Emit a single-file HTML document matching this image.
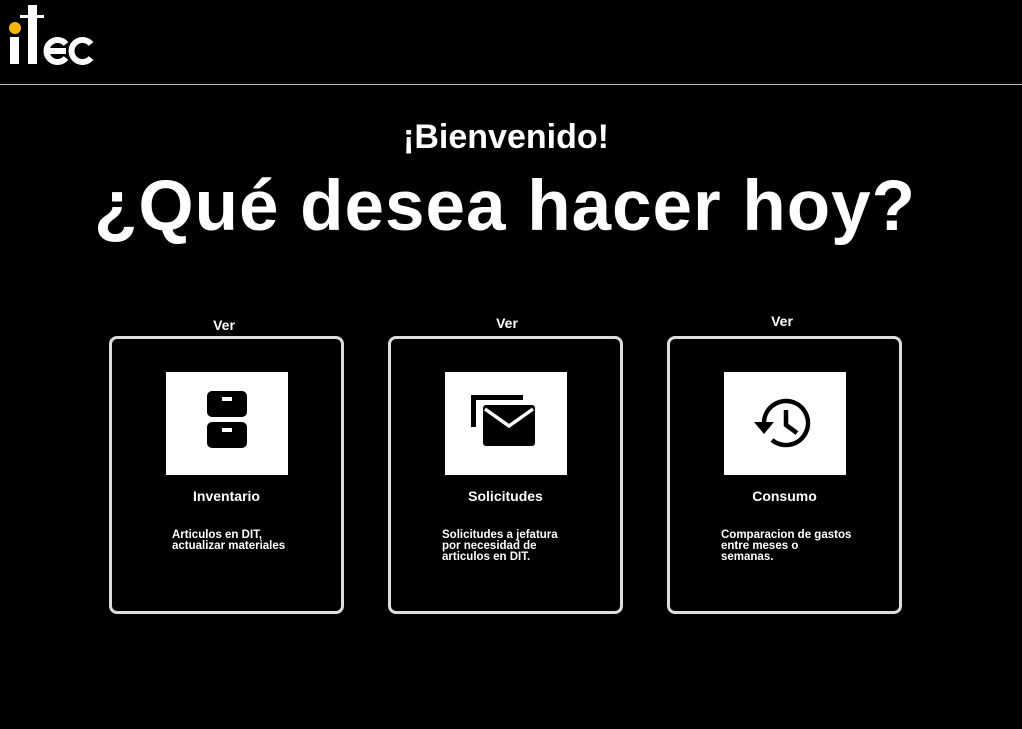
<!DOCTYPE html>
<html><head><meta charset="utf-8"><style>
body{margin:0;width:1022px;height:729px;background:#000;color:#fff;font-family:"Liberation Sans",sans-serif;position:relative;overflow:hidden}
.hr{position:absolute;left:0;top:84px;width:1022px;height:1px;background:#bbb}
.h1{position:absolute;top:118px;left:0;width:1012px;text-align:center;font-size:34px;font-weight:bold}
.h2{position:absolute;top:166px;left:0;width:1010px;text-align:center;font-size:71px;font-weight:bold;letter-spacing:1px}
.ver{position:absolute;font-size:14px;font-weight:bold;width:100px;text-align:center}
.card{position:absolute;top:336px;width:229px;height:272px;border:3px solid #ddd;border-radius:8px}
.box{position:absolute;left:54px;top:33px;width:122px;height:103px;background:#fff}
.t{position:absolute;top:149px;left:0;width:100%;text-align:center;font-size:14px;font-weight:bold}
.d{position:absolute;top:191px;left:60px;font-size:11.5px;font-weight:bold;line-height:11px}
</style></head><body>
<svg style="position:absolute;left:0;top:0" width="100" height="70">
<circle cx="15" cy="28" r="6" fill="#f5b800"/>
<rect x="10" y="37" width="9" height="27" fill="#fff"/>
<rect x="28" y="5" width="9" height="59" fill="#fff"/>
<rect x="20" y="15" width="24" height="3" fill="#fff"/>
<path d="M66 44a11 11 0 1 0 0 14M46 51h20" stroke="#fff" stroke-width="6" fill="none"/>
<path d="M91 44a11 11 0 1 0 0 14" stroke="#fff" stroke-width="6" fill="none"/>
</svg>
<div class="hr"></div>
<div class="h1">¡Bienvenido!</div>
<div class="h2">¿Qué desea hacer hoy?</div>
<div class="ver" style="left:174px;top:317px">Ver</div>
<div class="ver" style="left:457px;top:315px">Ver</div>
<div class="ver" style="left:732px;top:313px">Ver</div>
<div class="card" style="left:109px"><div class="box">
<svg width="122" height="103"><rect x="41" y="19" width="40" height="26" rx="5"/><rect x="41" y="50" width="40" height="26" rx="5"/><rect x="56" y="25" width="10" height="4" fill="#fff"/><rect x="56" y="56" width="10" height="4" fill="#fff"/></svg>
</div><div class="t">Inventario</div><div class="d">Articulos en DIT,<br>actualizar materiales</div></div>
<div class="card" style="left:388px"><div class="box">
<svg width="122" height="103"><path d="M26 55V23h52v5H31v27z"/><rect x="38" y="33" width="52" height="41" rx="3"/><path d="M40 37l24 17 24-17" stroke="#fff" stroke-width="3.5" fill="none"/></svg>
</div><div class="t">Solicitudes</div><div class="d" style="left:51px">Solicitudes a jefatura<br>por necesidad de<br>articulos en DIT.</div></div>
<div class="card" style="left:667px"><div class="box">
<svg width="122" height="103"><path d="M40 51A22 22 0 1 1 48 68" stroke="#000" stroke-width="4.5" fill="none"/><path d="M30 50h20l-10 12z"/><path d="M62 38v15l11 8" stroke="#000" stroke-width="4.5" fill="none"/></svg>
</div><div class="t">Consumo</div><div class="d" style="left:51px">Comparacion de gastos<br>entre meses o<br>semanas.</div></div>
</body></html>
